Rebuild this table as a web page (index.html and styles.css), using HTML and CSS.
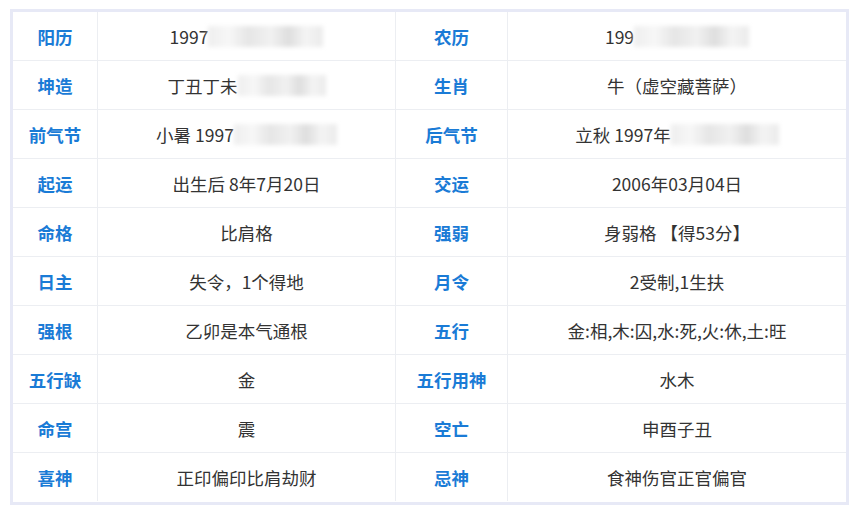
FILE: index.html
```html
<!DOCTYPE html>
<html lang="zh-CN">
<head>
<meta charset="utf-8">
<link rel="stylesheet" href="styles.css">
</head>
<body>
<div class="wrap">
  <div class="grid">
    <div class="c k">阳历</div><div class="c v">1997<span class="blur w115"></span></div>
    <div class="c k">农历</div><div class="c v last">199<span class="blur w115"></span></div>

    <div class="c k">坤造</div><div class="c v">丁丑丁未<span class="blur w88"></span></div>
    <div class="c k">生肖</div><div class="c v last">牛（虚空藏菩萨）</div>

    <div class="c k">前气节</div><div class="c v">小暑 1997<span class="blur w103"></span></div>
    <div class="c k">后气节</div><div class="c v last">立秋 1997年<span class="blur w108"></span></div>

    <div class="c k">起运</div><div class="c v">出生后 8年7月20日</div>
    <div class="c k">交运</div><div class="c v last">2006年03月04日</div>

    <div class="c k">命格</div><div class="c v">比肩格</div>
    <div class="c k">强弱</div><div class="c v last">身弱格 【得53分】</div>

    <div class="c k">日主</div><div class="c v">失令，1个得地</div>
    <div class="c k">月令</div><div class="c v last">2受制,1生扶</div>

    <div class="c k">强根</div><div class="c v">乙卯是本气通根</div>
    <div class="c k">五行</div><div class="c v last">金:相,木:囚,水:死,火:休,土:旺</div>

    <div class="c k">五行缺</div><div class="c v">金</div>
    <div class="c k">五行用神</div><div class="c v last">水木</div>

    <div class="c k">命宫</div><div class="c v">震</div>
    <div class="c k">空亡</div><div class="c v last">申酉子丑</div>

    <div class="c k b">喜神</div><div class="c v b">正印偏印比肩劫财</div>
    <div class="c k b">忌神</div><div class="c v last b">食神伤官正官偏官</div>
  </div>
</div>
</body>
</html>
```

FILE: styles.css
```css
html, body {
  margin: 0;
  padding: 0;
  background: #ffffff;
}
body {
  font-family: "Noto Sans CJK SC", "Noto Sans", sans-serif;
}
.wrap {
  margin: 9px 0 0 10px;
  width: 833px;
  border: 3px solid #e7e9f6;
}
.grid {
  display: grid;
  grid-template-columns: 85px 298px 112px 1fr;
  grid-auto-rows: 49px;
}
.c {
  display: flex;
  align-items: center;
  justify-content: center;
  border-right: 1px solid #eceef2;
  border-bottom: 1px solid #eceef2;
  box-sizing: border-box;
  white-space: nowrap;
}
.c.last {
  border-right: none;
}
.c.b {
  border-bottom: none;
}
.grid .c.b {
  height: 48px;
}
.k {
  color: #1a7bd6;
  font-weight: 700;
  font-size: 17.5px;
}
.v {
  color: #333333;
  font-size: 17.5px;
}
.blur {
  display: inline-block;
  height: 21px;
  background: linear-gradient(90deg, #eeeeee 0%, #f7f7f7 18%, #e6e6e6 35%, #f1f1f1 55%, #dedede 70%, #f4f4f4 85%, #ebebeb 100%);
  filter: blur(2px);
}
.w115 { width: 115px; }
.w88 { width: 88px; }
.w103 { width: 103px; }
.w108 { width: 108px; }
```
